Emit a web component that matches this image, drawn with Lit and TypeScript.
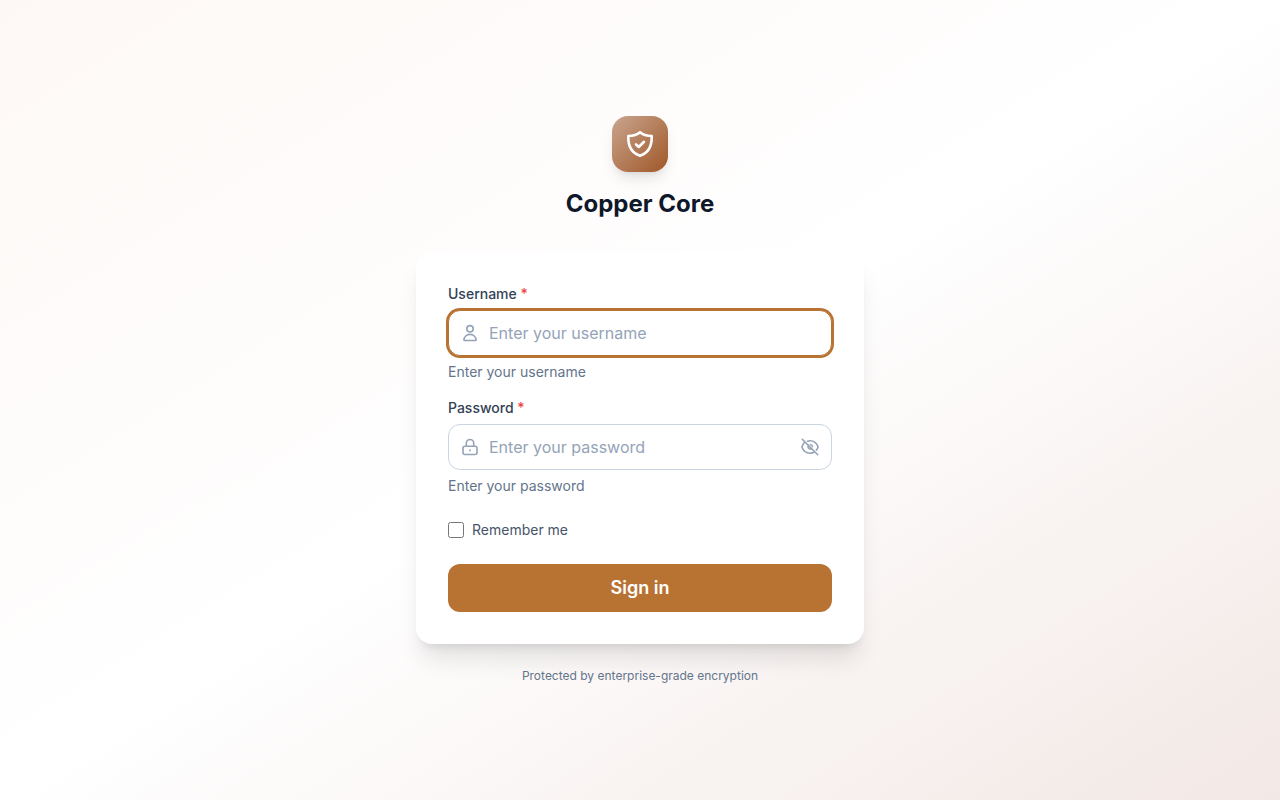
import { LitElement, html, css, svg } from "lit";
import { customElement, state, query } from "lit/decorators.js";

const shieldIcon = html`<svg class="shield" viewBox="0 0 28 28" aria-hidden="true">
  <path d="M14 2.300C11.200 4.800 7.200 6 2.300 6C2 16 5.500 23 14 25.700C22.500 23 26 16 25.700 6C20.800 6 16.800 4.800 14 2.300Z" />
  <path d="M10 14.500L12.700 17L18 11.800" />
</svg>`;

const userIcon = html`<svg class="icon" viewBox="0 0 20 20" aria-hidden="true">
  <circle cx="10" cy="5.800" r="3.200" />
  <path d="M4 17C4 13.800 6.600 11.400 10 11.400S16 13.800 16 17C16 17.400 15.800 17.500 15.500 17.500H4.500C4.200 17.500 4 17.400 4 17Z" />
</svg>`;

const lockIcon = html`<svg class="icon" viewBox="0 0 20 20" aria-hidden="true">
  <rect x="3" y="9.200" width="14" height="8.300" rx="2" />
  <path d="M6.300 9.200V6.200a3.700 3.700 0 0 1 7.400 0V9.200" />
  <path d="M10 13V13.700" />
</svg>`;

const eyeIcon = svg`
  <path d="M1.900 10C3.200 6.200 6.300 3.800 10 3.800S16.800 6.200 18.100 10C16.800 13.800 13.700 16.200 10 16.200S3.200 13.800 1.900 10Z" />
  <circle cx="10" cy="10" r="2.600" />`;

const eyeOffIcon = svg`
  <path d="M4.300 5.800C3.200 6.900 2.400 8.300 1.900 10C3.200 13.800 6.300 16.200 10 16.200C11.600 16.200 13.100 15.800 14.300 15" />
  <path d="M7.600 4.200C8.400 3.900 9.200 3.800 10 3.800C13.700 3.800 16.800 6.200 18.100 10C17.700 11.200 17.100 12.200 16.400 13.100" />
  <path d="M8.300 8.300A2.500 2.500 0 0 0 11.700 11.700" />
  <path d="M10.400 7.500A2.500 2.500 0 0 1 12.500 9.600" />
  <path d="M2.300 2.300L17.700 17.700" />`;

@customElement("app-root")
export class AppRoot extends LitElement {
  static styles = css`
    :host {
      display: block;
      font-family: Inter, "Liberation Sans", sans-serif;
      color: #0f172a;
    }
    *, *::before, *::after { box-sizing: border-box; }
    .page {
      min-height: 100vh;
      display: flex;
      align-items: center;
      justify-content: center;
      padding: 16px;
      background: linear-gradient(to bottom right, #fdf8f6, #ffffff, #f2e8e5);
    }
    .content { width: 100%; max-width: 448px; }
    .brand {
      display: flex;
      flex-direction: column;
      align-items: center;
      gap: 16px;
      margin-bottom: 32px;
    }
    .logo {
      width: 56px;
      height: 56px;
      display: grid;
      place-items: center;
      border-radius: 16px;
      background: linear-gradient(to bottom right, #c9a58e, #9f5727);
      box-shadow: 0 10px 15px -3px rgb(0 0 0 / 0.1), 0 4px 6px -4px rgb(0 0 0 / 0.1);
    }
    svg { display: block; fill: none; stroke: currentColor; stroke-linecap: round; stroke-linejoin: round; }
    .shield { width: 28px; height: 28px; color: #fff; stroke-width: 2.6; }
    .title { margin: 0; font-size: 24px; line-height: 32px; font-weight: 700; }
    .card {
      padding: 32px;
      border-radius: 16px;
      background: #fff;
      box-shadow: 0 20px 25px -5px rgb(0 0 0 / 0.1), 0 8px 10px -6px rgb(0 0 0 / 0.1);
    }
    .field { margin-bottom: 16px; }
    .label { display: block; margin-bottom: 6px; font-size: 14px; line-height: 20px; font-weight: 500; color: #334155; }
    .required { color: #ef4444; }
    .control {
      display: flex;
      align-items: center;
      gap: 9px;
      height: 46px;
      padding: 0 11px;
      border: 1px solid #cbd5e1;
      border-radius: 12px;
      background: #fff;
      color: #94a3b8;
    }
    .control:has(.input:focus) { border-color: #b87333; box-shadow: 0 0 0 2px #b87333; }
    .icon { flex: none; width: 20px; height: 20px; stroke-width: 1.6; }
    .input {
      flex: 1;
      min-width: 0;
      padding: 0;
      border: 0;
      outline: 0;
      background: transparent;
      font: inherit;
      font-size: 16px;
      line-height: 24px;
      color: #0f172a;
    }
    .input::placeholder { color: #94a3b8; opacity: 1; }
    .toggle { flex: none; padding: 0; border: 0; background: none; color: inherit; cursor: pointer; }
    .hint { margin: 6px 0 0; font-size: 14px; line-height: 20px; color: #64748b; }
    .remember {
      display: flex;
      align-items: center;
      gap: 8px;
      margin: 24px 0;
      font-size: 14px;
      line-height: 20px;
      color: #475569;
    }
    .checkbox { width: 16px; height: 16px; margin: 0; accent-color: #b87333; }
    .submit {
      display: block;
      width: 100%;
      height: 48px;
      padding: 0 24px;
      border: 0;
      border-radius: 12px;
      background: #b87333;
      color: #fff;
      font: inherit;
      font-size: 18px;
      line-height: 28px;
      font-weight: 600;
      cursor: pointer;
    }
    .footer { margin: 24px 0 0; text-align: center; font-size: 12px; line-height: 16px; color: #64748b; }
  `;

  @state() private revealed = false;
  @query("#username") private username!: HTMLInputElement;

  firstUpdated() {
    this.username.focus();
  }

  private toggle() {
    this.revealed = !this.revealed;
  }

  render() {
    return html`
      <main class="page">
        <div class="content">
          <header class="brand">
            <div class="logo">${shieldIcon}</div>
            <h1 class="title">Copper Core</h1>
          </header>
          <form class="card" @submit=${(e: Event) => e.preventDefault()}>
            <div class="field">
              <label class="label" for="username">Username <span class="required">*</span></label>
              <div class="control">
                ${userIcon}
                <input class="input" id="username" type="text" autocomplete="username" placeholder="Enter your username" aria-describedby="username-hint" required />
              </div>
              <p class="hint" id="username-hint">Enter your username</p>
            </div>
            <div class="field">
              <label class="label" for="password">Password <span class="required">*</span></label>
              <div class="control">
                ${lockIcon}
                <input class="input" id="password" type=${this.revealed ? "text" : "password"} autocomplete="current-password" placeholder="Enter your password" aria-describedby="password-hint" required />
                <button class="toggle" type="button" aria-label="Toggle password visibility" @click=${this.toggle}>
                  <svg class="icon" viewBox="0 0 20 20" aria-hidden="true">${this.revealed ? eyeIcon : eyeOffIcon}</svg>
                </button>
              </div>
              <p class="hint" id="password-hint">Enter your password</p>
            </div>
            <label class="remember"><input class="checkbox" type="checkbox" />Remember me</label>
            <button class="submit" type="submit">Sign in</button>
          </form>
          <p class="footer">Protected by enterprise-grade encryption</p>
        </div>
      </main>
    `;
  }
}
